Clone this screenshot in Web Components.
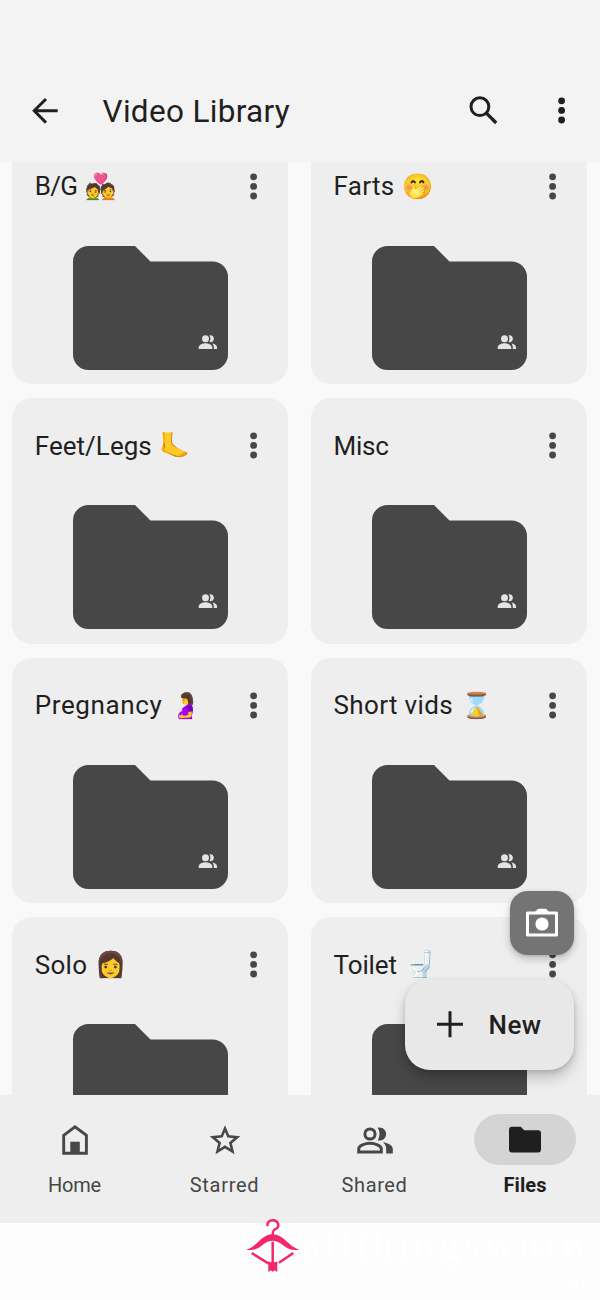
<!DOCTYPE html>
<html lang="en">
<head>
<meta charset="utf-8">
<title>Video Library</title>
<style>
html,body{margin:0;padding:0}
body{width:600px;height:1300px;overflow:hidden;background:#fdfdfd;font-family:Roboto,"Noto Color Emoji",sans-serif;color:#1f1f1f}
</style>
</head>
<body>
<drive-screen></drive-screen>
<script>
class Base extends HTMLElement{
  connectedCallback(){
    if(this.shadowRoot)return;
    this.attachShadow({mode:'open'}).innerHTML=this.view();
  }
  attr(n){return this.getAttribute(n)||''}
}

/* A single line of text spread with letter-spacing to a given width. */
customElements.define('fit-text',class extends Base{
  view(){return `<style>:host{display:block;white-space:pre;flex:none}span{display:inline-block}</style><span><slot></slot></span>`}
  connectedCallback(){
    super.connectedCallback();
    const w=+this.attr('width'),s=this.shadowRoot.querySelector('span'),n=this.textContent.length;
    this.style.width=w+'px';
    s.style.letterSpacing=((w-s.getBoundingClientRect().width)/n).toFixed(3)+'px';
  }
});

customElements.define('more-dots',class extends Base{
  view(){return `<style>:host{display:block;width:8px;height:28px;color:#474747}svg{display:block}</style>
  <svg width="8" height="28" viewBox="0 0 8 28" fill="currentColor"><circle cx="3.600" cy="4.800" r="3.400"/><circle cx="3.600" cy="14.400" r="3.400"/><circle cx="3.600" cy="24" r="3.400"/></svg>`}
});

customElements.define('top-bar',class extends Base{
  view(){return `<style>
  :host{display:flex;box-sizing:border-box;height:162px;padding:60px 34.300px 0 31px;align-items:center;background:#f3f3f3}
  svg{display:block;flex:none}
  fit-text{font-size:31.500px;line-height:40px;margin:1px 0 0 43.500px}
  .gap{flex:1}
  more-dots{color:#1f1f1f;margin:-3px 0 0 58.500px}
  </style>
  <svg width="28" height="28" viewBox="0 0 28 28" fill="none" stroke="#1f1f1f" stroke-width="2.900"><path d="M26.700 13.800H3M15 2 3.200 13.800 15 25.600"/></svg>
  <fit-text width="187.500">Video Library</fit-text><div class="gap"></div>
  <svg width="30" height="30" viewBox="0 0 30 30" fill="none" stroke="#1f1f1f" stroke-width="3"><circle cx="10.900" cy="10.700" r="8.900"/><path d="m17.400 17.200 9.800 9.800" stroke-width="3.300"/></svg>
  <more-dots></more-dots>`}
});

customElements.define('folder-card',class extends Base{
  view(){return `<style>
  :host{display:block;box-sizing:border-box;height:245.500px;border-radius:20px;background:#eee;padding:25px 30px 0 22.500px}
  header{display:flex;height:44px;align-items:center}
  fit-text{font-size:26px;line-height:36px;margin-top:1px}
  .emoji{font:25px/36px "Noto Color Emoji",sans-serif;width:32px;white-space:nowrap;flex:none;margin:2px 0 0 8px}
  more-dots{margin-left:auto}
  .folder{display:block;margin:38px 0 0 38.200px}
  </style>
  <header><fit-text width="${this.attr('text-width')}">${this.attr('name')}</fit-text>${this.attr('emoji')?`<span class="emoji">${this.attr('emoji')}</span>`:''}<more-dots></more-dots></header>
  <svg class="folder" width="155" height="124" viewBox="0 0 155 124"><path fill="#474747" d="M15.500 0H62l15.500 15.500h62A15.500 15.500 0 0 1 155 31v77.500a15.500 15.500 0 0 1-15.500 15.500h-124A15.500 15.500 0 0 1 0 108.500v-93A15.500 15.500 0 0 1 15.500 0z"/>
  <g fill="#e3e3e3"><circle cx="132.500" cy="92.700" r="3.500"/><path d="M125.700 103v-1.300c0-3.200 4.500-4.400 6.800-4.400s6.800 1.200 6.800 4.400v1.300z"/><path d="M136.400 89.300c2.600-.7 4.500 1.200 4.500 3.400s-1.900 4.100-4.500 3.400c1.400-2 1.400-4.800 0-6.800zM139.500 97.500c2.700.5 4.600 1.800 4.600 4.200v1.300h-3.300v-1.300c0-1.700-.5-3.100-1.300-4.200z"/></g></svg>`}
});

customElements.define('folder-grid',class extends Base{
  view(){return `<style>
  :host{display:block;height:933px;overflow:hidden;background:#f9f9f9}
  div{display:grid;grid-template-columns:276px 276px;column-gap:22.700px;row-gap:14px;margin:-23.500px 0 0 12.300px}
  </style><div><slot></slot></div>`}
});

customElements.define('action-buttons',class extends Base{
  view(){return `<style>
  :host{position:absolute;right:25.600px;top:890.500px;display:flex;flex-direction:column;align-items:flex-end;gap:24px}
  .camera{display:grid;place-items:center;width:64px;height:64px;border-radius:18px;background:#747474;box-shadow:0 4px 9px #0003,0 1px 3px #0002}
  .new{display:flex;align-items:center;box-sizing:border-box;width:169.500px;height:91px;padding-left:30.600px;border-radius:25px;background:#e8e8e8;box-shadow:0 8px 14px #0003,0 2px 5px #0002}
  fit-text{font-size:26px;font-weight:500;line-height:36px;margin:1px 0 0 25px}
  svg{display:block}
  </style>
  <div class="camera"><svg width="34" height="32" viewBox="0 0 34 32"><path fill="none" stroke="#fff" stroke-width="3" stroke-linejoin="round" d="M2.500 6H31.500V28H2.500z"/><path fill="#fff" d="M9.500 5.500 12.500 2.200Q13 1.700 14 1.700h6q1 0 1.500.5l3 3.300z"/><circle cx="17" cy="17" r="6.600" fill="#fff"/></svg></div>
  <div class="new"><svg width="28" height="28" viewBox="0 0 28 28" stroke="#1f1f1f" stroke-width="3"><path d="M1 14.300h26M14 1.300v26"/></svg><fit-text width="53">New</fit-text></div>`}
});

const NAV_ICONS={
  home:'<path d="M6.700 12.300 18 3.900l11.400 8.400v17.900H6.700z" fill="none" stroke="currentColor" stroke-width="2.900"/><path fill="currentColor" d="M13.300 18.700h9.500v11h-9.500z"/>',
  star:'<path d="m18 5.600 3.300 7.800 8.800.8-6.700 5.700 2.100 8.600-7.500-4.700-7.500 4.700 2.100-8.600-6.700-5.700 8.800-.8z" fill="none" stroke="currentColor" stroke-width="2.600"/>',
  people:'<g fill="none" stroke="currentColor" stroke-width="3"><circle cx="13" cy="11" r="5.100"/><path d="M1.700 28.900v-3c0-3.500 6.500-5.600 11.300-5.600s11.300 2.100 11.300 5.600v3z"/></g><path fill="currentColor" d="M20.600 4.700c4.500-1.200 8.500 2 8.500 6.300s-4 7.500-8.500 6.300c2.500-3.700 2.500-8.900 0-12.600zM26.100 19.200c5 .8 9.700 3.200 9.700 6.800v4.400h-6.600V26c0-2.800-1.200-5.100-3.100-6.800z"/>',
  folder:'<path fill="currentColor" d="M4.800 4.700h9l3.400 3.500h13.900q2.900 0 2.900 2.900v16.400q0 2.900-2.900 2.900H4.900Q2 30.400 2 27.500V7.600q0-2.900 2.800-2.900z"/>'
};
customElements.define('nav-item',class extends Base{
  view(){return `<style>
  :host{display:flex;flex-direction:column;align-items:center;color:#474747;padding-top:19.400px}
  .pill{display:grid;place-items:center;width:102px;height:51px;border-radius:26px}
  fit-text{font-size:20px;line-height:26px;margin:6.500px 1px 0 0;font-weight:400}
  :host([active]){color:#1f1f1f}
  :host([active]) .pill{background:#d4d4d4}
  :host([active]) fit-text{font-weight:700;margin-right:0}
  svg{display:block;margin:2px 1px 0 0}
  :host([active]) svg{margin-top:0}
  </style><div class="pill"><svg width="36" height="36" viewBox="0 0 36 36">${NAV_ICONS[this.attr('icon')]}</svg></div><fit-text width="${this.attr('text-width')}">${this.attr('label')}</fit-text>`}
});
customElements.define('bottom-nav',class extends Base{
  view(){return `<style>:host{display:grid;grid-template-columns:repeat(4,150px);height:128px;background:#eee}</style><slot></slot>`}
});

customElements.define('brand-mark',class extends Base{
  view(){return `<style>
  :host{position:absolute;left:246px;top:1218px;display:flex;color:#fff}
  svg{display:block;flex:none}
  .words{display:flex;flex-direction:column;align-items:flex-end;margin:2px 0 0 1px;font-family:"Liberation Serif",serif}
  .a{font-size:42px;line-height:48px}.b{font-size:22px;line-height:26px;margin-top:-1px}
  </style>
  <svg width="54" height="56" viewBox="0 0 54 56"><g fill="none" stroke="#f5276b" stroke-width="2.500"><path d="M21.500 8.200C20.900 4.300 23.500 2.200 26.900 2.200c5.800 0 7.200 6.800 2.600 9-2.200 1-2.800 1.900-2.800 5.800"/><path d="M26.700 23.700V45M5.700 35l17 10.600M47.300 35 33 44.700"/></g>
  <path fill="#f5276b" d="M0 31.700C11.500 28.500 15.500 16.300 26.700 16.300S42 28.500 53.400 31.700c-14 2.500-16.700-9-26.700-9S14 34.200 0 31.700zM22.300 43.500l4.400 1 4.600-1V54l-2.700-1.700-1.800 1.500-1.900-1.500-2.600 1.700z"/></svg>
  <div class="words"><fit-text class="a" width="287">allthingsworn</fit-text><fit-text class="b" width="55">.com</fit-text></div>`}
});

customElements.define('drive-screen',class extends Base{
  view(){return `<style>:host{display:block;position:relative;width:600px;height:1300px;overflow:hidden}</style>
  <top-bar></top-bar>
  <folder-grid>
    <folder-card name="B/G" text-width="42.500" emoji="💑"></folder-card>
    <folder-card name="Farts" text-width="61" emoji="🤭"></folder-card>
    <folder-card name="Feet/Legs" text-width="117" emoji="🦶"></folder-card>
    <folder-card name="Misc" text-width="55"></folder-card>
    <folder-card name="Pregnancy" text-width="127.500" emoji="🤰"></folder-card>
    <folder-card name="Short vids" text-width="119.500" emoji="⌛"></folder-card>
    <folder-card name="Solo" text-width="52.500" emoji="👩"></folder-card>
    <folder-card name="Toilet" text-width="63.500" emoji="🚽"></folder-card>
  </folder-grid>
  <bottom-nav>
    <nav-item icon="home" label="Home" text-width="53"></nav-item>
    <nav-item icon="star" label="Starred" text-width="69.500"></nav-item>
    <nav-item icon="people" label="Shared" text-width="66"></nav-item>
    <nav-item icon="folder" label="Files" text-width="43" active></nav-item>
  </bottom-nav>
  <action-buttons></action-buttons>
  <brand-mark></brand-mark>`}
});
</script>
</body>
</html>
